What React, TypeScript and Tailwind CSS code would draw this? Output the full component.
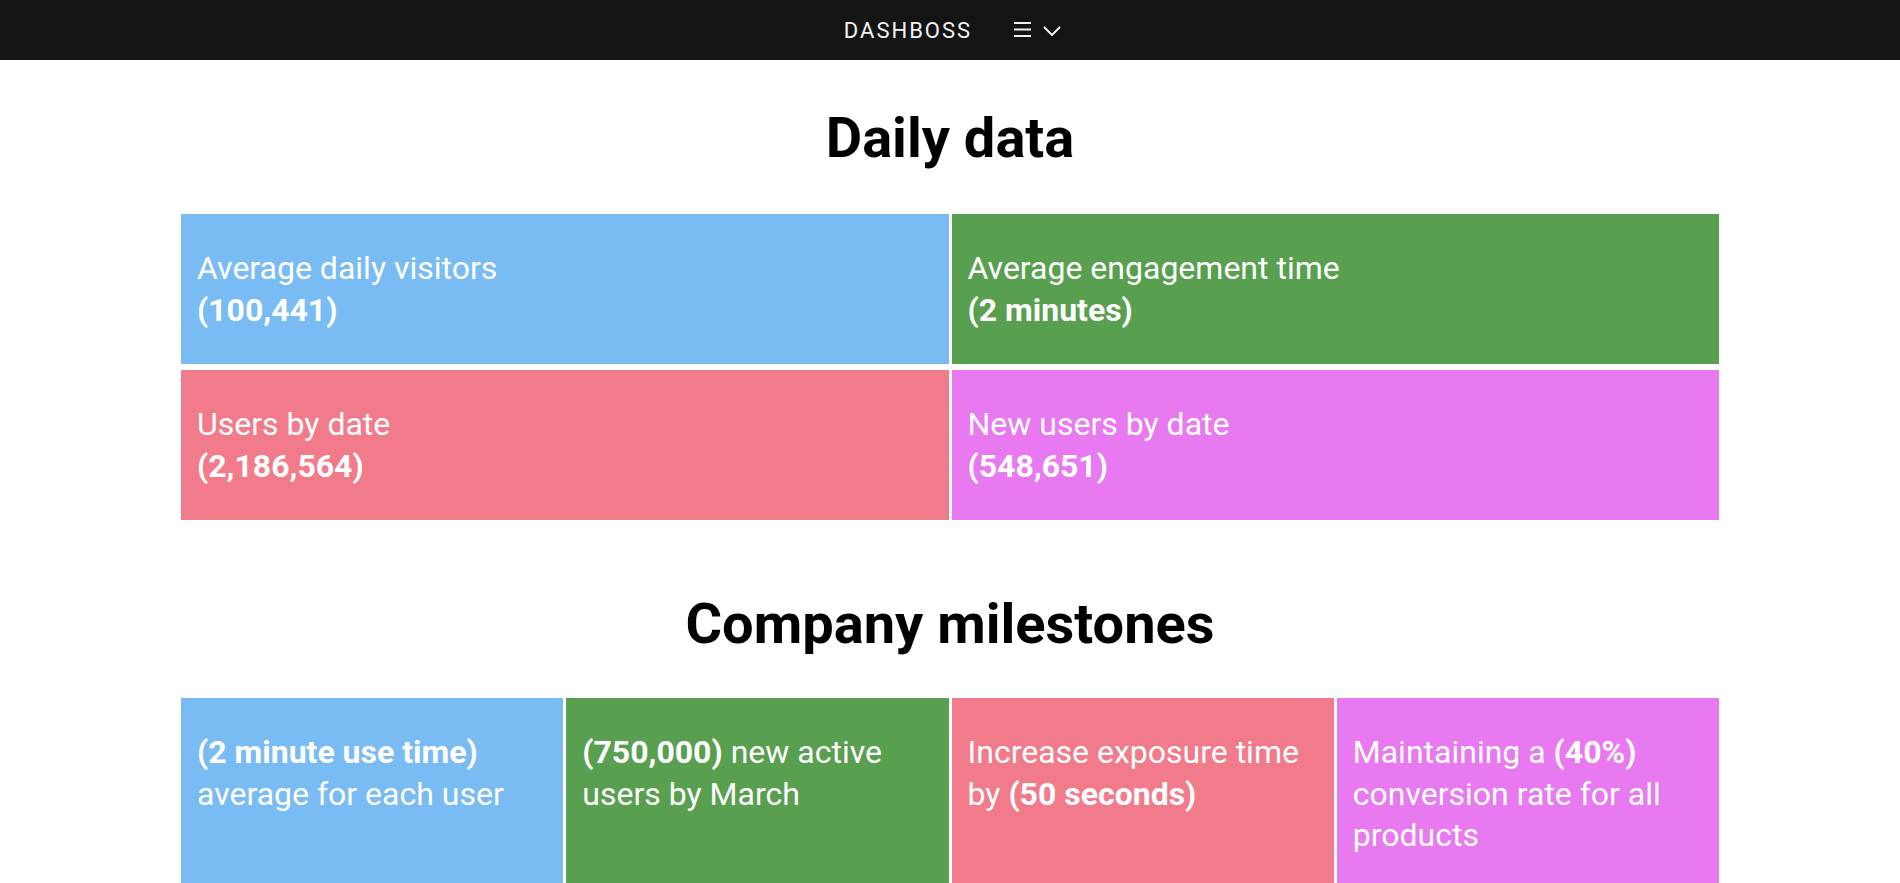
const daily = [
  { label: "Average daily visitors", value: "(100,441)", color: "bg-[#79bbf3]" },
  { label: "Average engagement time", value: "(2 minutes)", color: "bg-[#58a050]" },
  { label: "Users by date", value: "(2,186,564)", color: "bg-[#f27b8b]" },
  { label: "New users by date", value: "(548,651)", color: "bg-[#e879f1]" },
]

const Nav = () => (
  <nav className="flex h-[60px] w-full items-center justify-center bg-[#141414] pl-[5px] text-[#f2f2f2]">
    <span className="text-[22px] tracking-[2px]">DASHBOSS</span>
    <div className="ml-[42px] flex items-center gap-3">
      <svg width="17" height="17" viewBox="0 0 17 17" className="mt-[-1px]">
        <path d="M0 2h17M0 8.5h17M0 15h17" stroke="#f2f2f2" strokeWidth="2" />
      </svg>
      <svg width="18" height="10" viewBox="0 0 18 10" className="mt-[1px]">
        <polyline points="1,1 9,9 17,1" fill="none" stroke="#f2f2f2" strokeWidth="2" />
      </svg>
    </div>
  </nav>
)

export default function App() {
  return (
    <div className="min-h-screen w-full bg-white font-['Roboto',sans-serif]">
      <Nav />
      <main className="mx-auto w-[1538px] pb-20">
        <h2 className="mt-[45px] text-center text-[56px] leading-[67px] font-bold text-black">
          Daily data
        </h2>
        <div className="mt-[42px] grid grid-cols-2 gap-x-[3px] gap-y-[6px]">
          {daily.map((d) => (
            <div
              key={d.label}
              className={`${d.color} h-[150px] px-4 pt-[34px] text-[32px] leading-[41.6px] text-white`}
            >
              <p>{d.label}</p>
              <p className="font-bold">{d.value}</p>
            </div>
          ))}
        </div>

        <h2 className="mt-[71px] text-center text-[56px] leading-[67px] font-bold text-black">
          Company milestones
        </h2>
        <div className="mt-[40px] grid grid-cols-4 gap-x-[3px] text-[32px] leading-[41.6px] text-white">
          <div className="h-[240px] bg-[#79bbf3] px-4 pt-[34px]">
            <b>(2 minute use time)</b> average for each user
          </div>
          <div className="h-[240px] bg-[#58a050] px-4 pt-[34px]">
            <b>(750,000)</b> new active users by March
          </div>
          <div className="h-[240px] bg-[#f27b8b] px-4 pt-[34px]">
            Increase exposure time by <b>(50 seconds)</b>
          </div>
          <div className="h-[240px] bg-[#e879f1] px-4 pt-[34px]">
            Maintaining a <b>(40%)</b> conversion rate for all products
          </div>
        </div>
      </main>
    </div>
  )
}
